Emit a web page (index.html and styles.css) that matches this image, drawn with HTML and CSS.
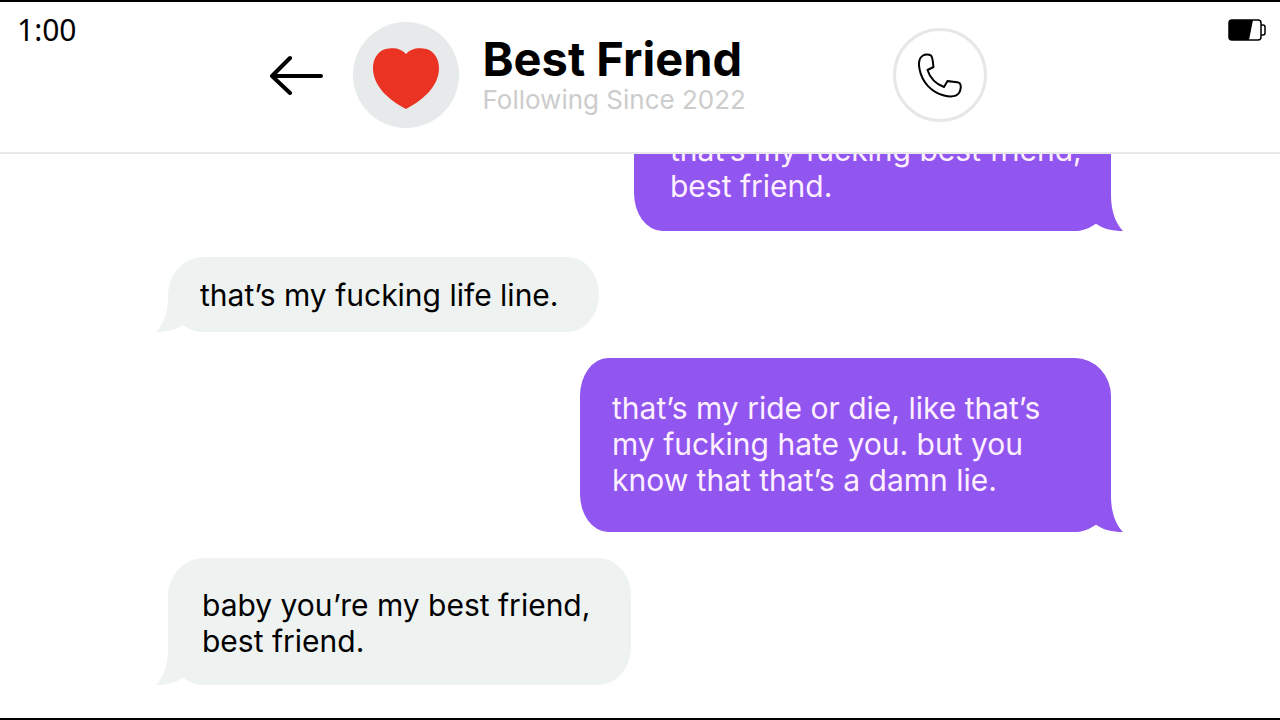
FILE: index.html
```html
<!DOCTYPE html>
<html lang="en">
<head>
<meta charset="utf-8">
<meta name="viewport" content="width=device-width, initial-scale=1">
<title>Best Friend</title>
<link rel="stylesheet" href="styles.css">
</head>
<body class="app">
<svg class="defs" aria-hidden="true">
  <symbol id="tail" viewBox="0 0 50 40"><path fill="currentColor" d="M0 0H38V4C38 19 42 32 50 40C39 40 30 38 22 32C16 37 9 40 2 40H0Z"/></symbol>
</svg>
<header class="header">
  <time class="clock">1:00</time>
  <div class="contact">
    <button class="back" type="button" aria-label="Back">
      <svg class="back-icon" viewBox="0 0 54 40" fill="none" stroke="currentColor" stroke-width="4" stroke-linecap="round" stroke-linejoin="round"><path d="M52 21H3M21 3L3 21L21 38"/></svg>
    </button>
    <div class="avatar">
      <svg class="heart" viewBox="0 0 66 61"><path fill="currentColor" d="M33 6C29 1 22-0.500 16 0.500C6 1 0 10 0 20C0 37 14 51 33 61C52 51 66 37 66 20C66 10 60 1 50 0.500C44-0.500 37 1 33 6Z"/></svg>
    </div>
    <div class="identity">
      <h1 class="name">Best Friend</h1>
      <p class="since">Following Since 2022</p>
    </div>
    <button class="call" type="button" aria-label="Call">
      <svg class="call-icon" viewBox="0 0 44 45" fill="none" stroke="currentColor" stroke-width="2" stroke-linejoin="round"><path d="M5 2.500C7 1 11 1 13 2.500C15 5 15 11 15.500 14L9.500 17C12 25 18 31 26 34L29.500 28C34 29 39 28.500 41.500 30C43.500 32 43 37 41 40C38 44 32 44 26 42.500C13 39 4 29 1.500 16C0.500 11 1 5 5 2.500Z"/></svg>
    </button>
  </div>
  <svg class="battery" viewBox="0 0 38 22" role="img" aria-label="Battery">
    <rect x="1" y="1" width="32" height="20" rx="3" fill="none" stroke="currentColor" stroke-width="1.500"/>
    <path d="M4 1H25L21 21H4Q1 21 1 18V4Q1 1 4 1Z" fill="currentColor"/>
    <path d="M33 6H35Q37 6 37 8V14Q37 16 35 16H33" fill="none" stroke="currentColor" stroke-width="1.500"/>
  </svg>
</header>
<main class="thread">
  <div class="messages">
    <p class="bubble sent wide">that’s my fucking best friend,<br>best friend.<svg class="tail"><use href="#tail"/></svg></p>
    <p class="bubble received short">that’s my fucking life line.<svg class="tail"><use href="#tail"/></svg></p>
    <p class="bubble sent long">that’s my ride or die, like that’s<br>my fucking hate you. but you<br>know that that’s a damn lie.<svg class="tail"><use href="#tail"/></svg></p>
    <p class="bubble received medium">baby you’re my best friend,<br>best friend.<svg class="tail"><use href="#tail"/></svg></p>
  </div>
</main>
</body>
</html>
```
FILE: styles.css
```css
* { box-sizing: border-box; }
h1, p { margin: 0; }
button { padding: 0; border: 0; background: none; color: inherit; cursor: pointer; }
svg { display: block; }

.app {
  display: flex;
  flex-direction: column;
  height: 100vh;
  margin: 0;
  border: solid #000;
  border-width: 2px 0;
  background: #fff;
  color: #000;
  font-family: Inter, "Liberation Sans", sans-serif;
}
.defs { position: absolute; width: 0; height: 0; }

.header {
  display: grid;
  grid-template-columns: 1fr auto 1fr;
  align-items: start;
  flex: none;
  padding: 6px 14px 24px 17px;
  border-bottom: 2px solid #e8e8e8;
}
.clock { font: 30px/44px "Noto Sans", sans-serif; }
.contact { display: flex; align-items: center; padding-top: 14px; margin-right: 28px; }
.back { margin-right: 30px; }
.back-icon { width: 54px; height: 40px; }
.avatar {
  display: grid;
  place-items: center;
  width: 106px;
  height: 106px;
  margin-right: 24px;
  border-radius: 50%;
  background: #e6eaea;
}
.heart { width: 66px; height: 61px; margin-top: 6px; color: #ea3323; }
.identity { width: 263px; margin-right: 147px; padding-top: 4px; white-space: nowrap; }
.name { font-size: 47px; font-weight: 700; line-height: 46px; }
.since { color: #ccc; font-size: 26px; line-height: 36px; }
.call {
  display: grid;
  place-items: center;
  width: 94px;
  height: 94px;
  border: 3px solid #e6e8e8;
  border-radius: 50%;
}
.call-icon { width: 44px; height: 45px; }
.battery { justify-self: end; width: 38px; height: 22px; margin-top: 11px; }

.thread {
  display: flex;
  flex-direction: column;
  justify-content: flex-end;
  flex: 1;
  min-height: 0;
  padding: 0 25px 33px 24px;
  overflow: hidden;
}
.messages {
  display: flex;
  flex-direction: column;
  gap: 26px;
  width: 100%;
  max-width: 943px;
  margin: 0 auto;
}
.bubble {
  position: relative;
  isolation: isolate;
  max-width: 100%;
  font-size: 30px;
  line-height: 36px;
}
.sent {
  align-self: flex-end;
  border-radius: 28px 36px 36px 28px / 38px;
  background: #9155f0;
  color: #fff0ff;
}
.received {
  align-self: flex-start;
  border-radius: 36px 32px 32px 36px / 38px;
  background: #eef2f1;
}
.wide { width: 477px; padding: 28px 20px 27px 36px; }
.short { width: 431px; padding: 20px 20px 19px 32px; }
.long { width: 531px; padding: 32px 32px 34px; }
.medium { width: 463px; padding: 29px 20px 26px 34px; }
.tail { position: absolute; z-index: -1; bottom: 0; width: 50px; height: 40px; }
.sent .tail { right: -12px; color: #9155f0; }
.received .tail { left: -12px; color: #eef2f1; transform: scaleX(-1); }
```
